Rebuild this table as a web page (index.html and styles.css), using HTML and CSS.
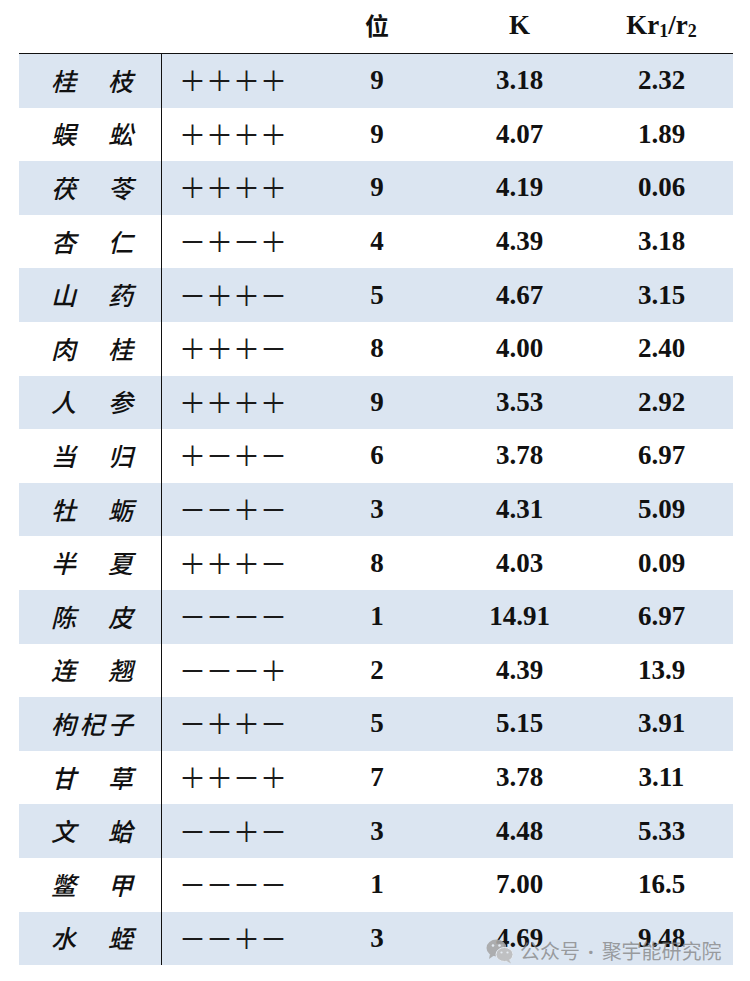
FILE: index.html
```html
<!DOCTYPE html>
<html lang="zh">
<head>
<meta charset="utf-8">
<link rel="stylesheet" href="styles.css">
</head>
<body>
<div class="page">
  <div class="table">
    <div class="head">
      <div class="hc"></div>
      <div class="hc"></div>
      <div class="hc cjkb"><span>位</span></div>
      <div class="hc"><span>K</span></div>
      <div class="hc"><span>Kr<sub>1</sub>/r<sub>2</sub></span></div>
    </div>
    <div class="body">
      <div class="row b"><div class="nm"><span>桂</span><span>枝</span></div><div class="sg">＋＋＋＋</div><div class="n">9</div><div class="n">3.18</div><div class="n">2.32</div></div>
      <div class="row"><div class="nm"><span>蜈</span><span>蚣</span></div><div class="sg">＋＋＋＋</div><div class="n">9</div><div class="n">4.07</div><div class="n">1.89</div></div>
      <div class="row b"><div class="nm"><span>茯</span><span>苓</span></div><div class="sg">＋＋＋＋</div><div class="n">9</div><div class="n">4.19</div><div class="n">0.06</div></div>
      <div class="row"><div class="nm"><span>杏</span><span>仁</span></div><div class="sg">－＋－＋</div><div class="n">4</div><div class="n">4.39</div><div class="n">3.18</div></div>
      <div class="row b"><div class="nm"><span>山</span><span>药</span></div><div class="sg">－＋＋－</div><div class="n">5</div><div class="n">4.67</div><div class="n">3.15</div></div>
      <div class="row"><div class="nm"><span>肉</span><span>桂</span></div><div class="sg">＋＋＋－</div><div class="n">8</div><div class="n">4.00</div><div class="n">2.40</div></div>
      <div class="row b"><div class="nm"><span>人</span><span>参</span></div><div class="sg">＋＋＋＋</div><div class="n">9</div><div class="n">3.53</div><div class="n">2.92</div></div>
      <div class="row"><div class="nm"><span>当</span><span>归</span></div><div class="sg">＋－＋－</div><div class="n">6</div><div class="n">3.78</div><div class="n">6.97</div></div>
      <div class="row b"><div class="nm"><span>牡</span><span>蛎</span></div><div class="sg">－－＋－</div><div class="n">3</div><div class="n">4.31</div><div class="n">5.09</div></div>
      <div class="row"><div class="nm"><span>半</span><span>夏</span></div><div class="sg">＋＋＋－</div><div class="n">8</div><div class="n">4.03</div><div class="n">0.09</div></div>
      <div class="row b"><div class="nm"><span>陈</span><span>皮</span></div><div class="sg">－－－－</div><div class="n">1</div><div class="n">14.91</div><div class="n">6.97</div></div>
      <div class="row"><div class="nm"><span>连</span><span>翘</span></div><div class="sg">－－－＋</div><div class="n">2</div><div class="n">4.39</div><div class="n">13.9</div></div>
      <div class="row b"><div class="nm"><span>枸</span><span>杞</span><span>子</span></div><div class="sg">－＋＋－</div><div class="n">5</div><div class="n">5.15</div><div class="n">3.91</div></div>
      <div class="row"><div class="nm"><span>甘</span><span>草</span></div><div class="sg">＋＋－＋</div><div class="n">7</div><div class="n">3.78</div><div class="n">3.11</div></div>
      <div class="row b"><div class="nm"><span>文</span><span>蛤</span></div><div class="sg">－－＋－</div><div class="n">3</div><div class="n">4.48</div><div class="n">5.33</div></div>
      <div class="row"><div class="nm"><span>鳖</span><span>甲</span></div><div class="sg">－－－－</div><div class="n">1</div><div class="n">7.00</div><div class="n">16.5</div></div>
      <div class="row b"><div class="nm"><span>水</span><span>蛭</span></div><div class="sg">－－＋－</div><div class="n">3</div><div class="n">4.69</div><div class="n">9.48</div></div>
    </div>
  </div>
  <div class="wm">
    <svg class="wx" width="28" height="26" viewBox="0 0 28 26">
      <ellipse cx="10.5" cy="10" rx="10" ry="8.5" fill="#a8a8a8"/>
      <path d="M4 16 L3 21 L8 17.5 Z" fill="#a8a8a8"/>
      <circle cx="7" cy="7.5" r="1.3" fill="#e6ecf3"/>
      <circle cx="13.5" cy="7.5" r="1.3" fill="#e6ecf3"/>
      <ellipse cx="18.5" cy="16.5" rx="8.5" ry="7" fill="#bdbdbd" stroke="#e6ecf3" stroke-width="1"/>
      <path d="M23 21.5 L25 25.5 L20 22.5 Z" fill="#bdbdbd"/>
      <circle cx="15.5" cy="14.5" r="1.1" fill="#e6ecf3"/>
      <circle cx="21.5" cy="14.5" r="1.1" fill="#e6ecf3"/>
    </svg>
    <span>公众号<span class="dot">·</span>聚宇能研究院</span>
  </div>
</div>
</body>
</html>
```
FILE: styles.css
```css
html, body {
  margin: 0;
  padding: 0;
  background: #ffffff;
}
.page {
  position: relative;
  width: 750px;
  height: 981px;
  overflow: hidden;
}
.table {
  margin-left: 19px;
  width: 714px;
}
.head,
.row {
  display: grid;
  grid-template-columns: 143px 143px 144px 141px 143px;
}
.head {
  height: 53px;
  border-bottom: 1px solid #111;
  font-family: "Liberation Serif", "Noto Sans CJK SC", serif;
  font-weight: bold;
  font-size: 27px;
  color: #111;
}
.hc {
  display: flex;
  align-items: center;
  justify-content: center;
  padding-bottom: 2px;
  white-space: nowrap;
}
.hc.cjkb {
  font-family: "Noto Sans CJK SC", sans-serif;
  font-weight: bold;
  font-size: 24px;
  padding-bottom: 4px;
}
.hc sub {
  font-size: 18px;
  vertical-align: -3px;
  line-height: 0;
}
.row {
  height: 53.6px;
  align-items: center;
}
.row.b {
  background: #dbe5f1;
}
.nm {
  height: 100%;
  border-right: 1px solid #111;
  box-sizing: border-box;
  display: flex;
  align-items: center;
  justify-content: space-between;
  padding: 0 28px 2px 32px;
  font-family: "Noto Sans CJK SC", sans-serif;
  font-style: italic;
  font-weight: 500;
  font-size: 25px;
  color: #111;
}
.sg {
  padding-left: 17px;
  padding-bottom: 2px;
  font-family: "Noto Sans CJK SC", sans-serif;
  font-weight: 400;
  font-size: 27px;
  color: #1a1a1a;
  white-space: nowrap;
}
.n {
  text-align: center;
  font-family: "Liberation Serif", serif;
  font-weight: bold;
  font-size: 27px;
  color: #111;
}
.wm {
  position: absolute;
  left: 486px;
  top: 936px;
  display: flex;
  align-items: center;
  gap: 6px;
  font-family: "Noto Sans CJK SC", sans-serif;
  font-size: 20px;
  color: rgba(130, 130, 130, 0.75);
  white-space: nowrap;
}
.wm .dot {
  font-family: "Noto Sans", sans-serif;
  font-weight: bold;
  padding: 0 8px;
}
.wx {
  opacity: 0.9;
}
```
